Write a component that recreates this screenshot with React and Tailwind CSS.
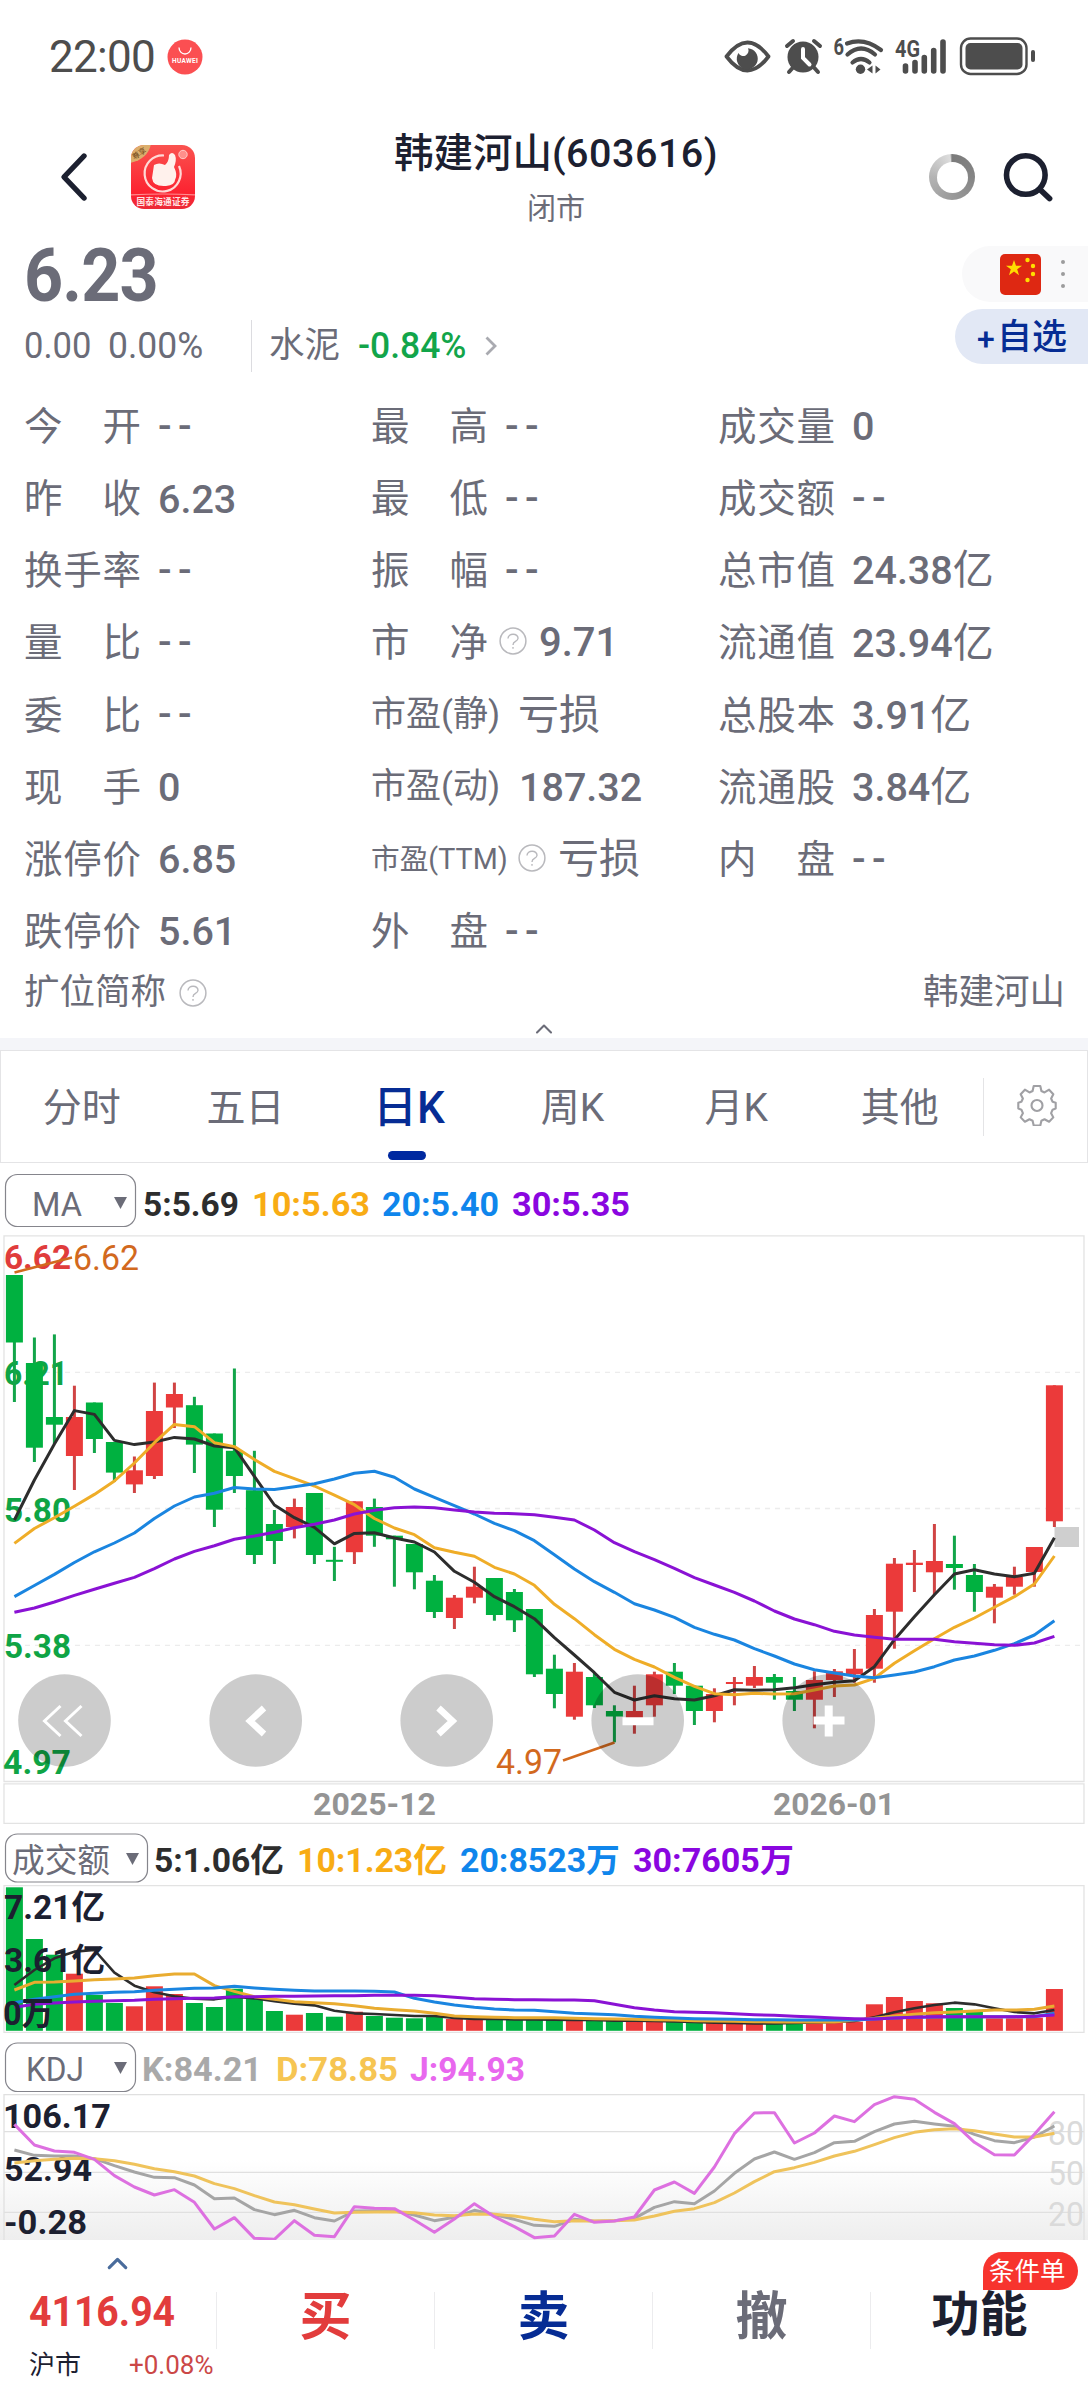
import { ChevronUp } from 'lucide-react';

const GREEN = '#00b140';
const RED = '#eb3a3a';
const STEP = 20;
const FIRST_X = 14.4;

// [high, bodyTop, bodyBottom, low, up]
const candles = [
  [1275, 1275, 1342.5, 1402, 0], [1337.5, 1363, 1447.7, 1462, 0], [1334.4, 1417, 1424.7, 1444, 0],
  [1385.7, 1417, 1456, 1490, 1], [1402.5, 1402.5, 1439, 1453, 0], [1442, 1442, 1472.6, 1481.8, 0],
  [1456.5, 1470.3, 1484.4, 1493, 1], [1382.6, 1411, 1476, 1479, 1], [1382.6, 1394, 1407.5, 1428, 1],
  [1396.8, 1405.2, 1444.6, 1473, 0], [1433.5, 1433.5, 1509.7, 1527, 0], [1368.5, 1450.8, 1476, 1493, 0],
  [1450.8, 1490.2, 1555, 1564, 0], [1510, 1524, 1541, 1564, 0], [1498.6, 1507, 1527, 1538.4, 1],
  [1493, 1493, 1555, 1564, 0], [1546.8, 1559.8, 1561.8, 1581, 0], [1501.3, 1501.3, 1552.2, 1564, 1],
  [1498.6, 1507, 1535.7, 1546.8, 0], [1535.7, 1535.7, 1539.3, 1586.7, 0], [1544, 1544, 1572.3, 1589.3, 0],
  [1575, 1580.7, 1612, 1618, 0], [1595, 1597.7, 1618, 1629, 1], [1566.7, 1586.7, 1597.7, 1603.3, 1],
  [1578, 1578, 1615, 1620.7, 0], [1589, 1592, 1620.3, 1632, 0], [1609, 1609, 1674.3, 1677, 0],
  [1654.7, 1668.7, 1694, 1708.3, 0], [1663, 1671.7, 1716.7, 1719.7, 1], [1673, 1677, 1705.3, 1708, 0],
  [1705.3, 1711, 1716.5, 1742.3, 0], [1685.7, 1711, 1725, 1733.7, 1], [1671.7, 1674.3, 1705.3, 1716.7, 1],
  [1663, 1671.7, 1685.7, 1694, 0], [1685.7, 1685.7, 1711, 1725, 0], [1688.3, 1694, 1711, 1722.3, 1],
  [1677, 1682, 1684, 1705.3, 1], [1666, 1677, 1685.7, 1688, 1], [1674, 1677, 1682.7, 1699.7, 0],
  [1677, 1691, 1699.7, 1711, 0], [1671.3, 1680, 1699.7, 1728.3, 1], [1669, 1671.3, 1680, 1697, 1],
  [1649, 1668.7, 1674.3, 1682.7, 1], [1609, 1615, 1668.7, 1682.7, 1], [1558, 1563.7, 1611.7, 1648.7, 1],
  [1550, 1562.7, 1565, 1592, 1], [1524, 1561, 1572.3, 1595, 1], [1535.7, 1564, 1568, 1589.7, 0],
  [1564, 1575, 1592, 1611.7, 0], [1584, 1586.7, 1597.7, 1623.3, 1], [1566.7, 1577, 1586.7, 1594.7, 1],
  [1547, 1547, 1572, 1586.7, 1], [1385.3, 1385.3, 1521.3, 1527, 1],
];

const ma5 = [1520, 1480, 1444, 1410.6, 1414.4, 1440.4, 1444.6, 1442, 1437.4, 1439, 1446, 1447.7, 1476.4, 1505, 1517.7, 1527.3, 1543.8, 1533.4, 1532.7, 1538, 1542, 1552, 1571.3, 1582.3, 1596.7, 1606.7, 1618.7, 1637.7, 1655, 1672.7, 1692.3, 1700, 1695.7, 1698.7, 1700, 1695.7, 1689.7, 1690.3, 1689.7, 1687.7, 1684.7, 1682.3, 1680.7, 1666.7, 1639.7, 1616.7, 1594.7, 1574, 1569.7, 1574, 1576.7, 1573.3, 1537.7];
const ma10 = [1543.4, 1528.5, 1517.7, 1506.3, 1494.4, 1481, 1463, 1442.7, 1424.4, 1426.7, 1442.7, 1446.6, 1459.6, 1471.4, 1478.7, 1486, 1495.2, 1504.7, 1518.5, 1528, 1534.7, 1547.7, 1552.3, 1556.3, 1567.3, 1574, 1585.3, 1604.3, 1618.7, 1634.7, 1649.3, 1659.3, 1667, 1677.3, 1686.3, 1693.7, 1694.7, 1693.3, 1694, 1693.7, 1690, 1686, 1685, 1678.3, 1663.3, 1650.7, 1638.7, 1627.3, 1618, 1607.3, 1596.7, 1584, 1556];
const ma20 = [1596.6, 1585.5, 1574.4, 1562.5, 1551.8, 1543, 1533, 1518.5, 1506, 1497, 1493.2, 1487.5, 1489, 1489.4, 1486.7, 1483.7, 1479, 1473.3, 1471.3, 1477.3, 1489, 1497.3, 1505.7, 1514, 1523.3, 1530.7, 1540.7, 1554.7, 1569, 1581.7, 1592.3, 1603.7, 1610, 1617.3, 1627.3, 1634.3, 1640, 1648.7, 1656, 1664, 1669.7, 1673, 1676, 1677.7, 1675, 1672, 1666.7, 1660, 1656, 1650.3, 1643.7, 1635, 1620.7];
const ma30 = [1612.3, 1608, 1602, 1595.4, 1589.3, 1583.2, 1577.4, 1568.6, 1559, 1551.4, 1545.7, 1539.2, 1536, 1532.3, 1527.7, 1524.2, 1520, 1514, 1510.3, 1507.7, 1507, 1507.7, 1510, 1512, 1513.3, 1513.7, 1514.7, 1517.3, 1520, 1530, 1542.7, 1551.7, 1559.7, 1568.3, 1577.7, 1585, 1592.3, 1601, 1611, 1619, 1624.7, 1631.3, 1635, 1637.3, 1639.3, 1639.3, 1639.3, 1641.7, 1643.3, 1644.7, 1645.3, 1643, 1636.3];

const volumes = [1887.3, 1939, 1954.7, 1973.7, 1995, 2003, 2006.3, 1986.3, 1994, 2003, 2007, 1988.7, 1996.7, 2011, 2014.7, 2013, 2016.7, 2011.7, 2016, 2017.7, 2018.3, 2017, 2019, 2019.7, 2020, 2020, 2020, 2020, 2020, 2021, 2020.3, 2020.7, 2020.7, 2021.3, 2021.3, 2022.3, 2024, 2023.3, 2022.7, 2022.7, 2022.7, 2022.3, 2021.7, 2004.3, 1997, 2001, 2003.3, 2008, 2011.7, 2018.3, 2018.3, 2017.7, 1989];
const volUp = [3, 6, 7, 8, 14, 17, 22, 23, 28, 31, 32, 35, 36, 37, 40, 41, 42, 43, 44, 45, 46, 49, 50, 51, 52];

// thirds of a pixel below 1820
const vol5 = [495, 450, 415, 395, 390, 458, 497, 517, 529, 536, 538, 530, 535, 544, 551, 556, 572, 580, 582, 585, 588, 588, 594, 597, 597, 598, 598, 599, 600, 600, 602, 602, 603, 604, 606, 608, 609, 610, 610, 609, 607, 606, 603, 592, 577, 565, 555, 548, 553, 565, 576, 580, 570];
const vol10 = [510, 487, 486, 483, 479, 477, 474, 467, 462, 462, 497, 514, 530, 538, 545, 548, 551, 557, 565, 569, 573, 580, 588, 590, 592, 593, 593, 593, 595, 596, 597, 598, 599, 600, 602, 603, 604, 605, 606, 606, 606, 606, 600, 595, 588, 583, 578, 576, 573, 570, 570, 568, 558];
const vol20 = [548, 538, 530, 523, 520, 517, 515, 511, 508, 505, 504, 499, 504, 508, 511, 513, 513, 513, 514, 516, 535, 546, 555, 562, 567, 570, 571, 575, 580, 582, 584, 589, 592, 594, 596, 597, 598, 599, 599, 600, 600, 600, 600, 597, 594, 592, 591, 590, 590, 590, 590, 590, 580];
const vol30 = [562, 553, 549, 546, 544, 542, 541, 538, 536, 535, 534, 530, 530, 529, 529, 528, 527, 527, 526, 526, 526, 527, 532, 536, 538, 539, 539, 540, 540, 542, 553, 563, 570, 575, 577, 578, 581, 584, 586, 589, 591, 594, 596, 597, 594, 592, 590, 590, 590, 590, 590, 589, 585];

// thirds of a pixel below 2090
const kLine = [180, 196, 198, 198, 206, 227, 246, 262, 263, 285, 326, 324, 359, 374, 361, 383, 393, 363, 362, 363, 375, 392, 382, 361, 374, 388, 406, 409, 388, 394, 392, 385, 352, 335, 341, 303, 250, 207, 186, 208, 188, 158, 154, 125, 102, 94, 102, 109, 133, 152, 158, 141, 108];
const dLine = [219, 212, 208, 205, 206, 212, 223, 236, 245, 258, 281, 296, 317, 336, 344, 357, 369, 367, 366, 365, 368, 375, 377, 372, 373, 378, 388, 395, 392, 393, 392, 390, 378, 364, 356, 338, 309, 275, 245, 233, 217, 198, 184, 164, 143, 127, 119, 116, 122, 132, 141, 141, 130];
const jLine = [103, 165, 183, 187, 208, 257, 291, 315, 299, 337, 417, 383, 445, 448, 392, 436, 440, 350, 355, 356, 390, 427, 387, 341, 380, 410, 443, 438, 373, 397, 393, 381, 300, 276, 310, 231, 131, 69, 68, 159, 129, 78, 95, 44, 20, 28, 67, 101, 157, 194, 195, 133, 65];

const xAt = (i) => FIRST_X + i * STEP;
const toPoints = (ys) => ys.map((y, i) => `${xAt(i)},${y}`).join(' ');
const thirds = (base, values) => values.map((v) => base + v / 3);

const Line = ({ ys, color, width = 3 }) => (
  <polyline points={toPoints(ys)} fill="none" stroke={color} strokeWidth={width} strokeLinejoin="round" />
);

const Label = ({ x, y, w, color, bold = true, size = 33, children }) => (
  <text
    x={x}
    y={y}
    fill={color}
    fontSize={size}
    fontWeight={bold ? 700 : 400}
    textLength={w}
    lengthAdjust="spacingAndGlyphs"
  >
    {children}
  </text>
);

const StatusBar = () => (
  <div className="flex h-[113px] items-center pl-[49px] pr-[49px] text-[#4d4d4d]">
    <span className="text-[44px] leading-none tracking-[-0.7px]">22:00</span>
    <svg className="ml-[12px] h-[36px] w-[36px]" viewBox="0 0 36 36">
      <circle cx="18" cy="18" r="17.5" fill="#fb4f52" />
      <path d="M12 8.500a6 6.500 0 0 0 12 0" fill="none" stroke="#fff" strokeWidth="1.300" />
      <text x="5" y="24" fontSize="6.500" fontWeight="700" fill="#fff" textLength="26">HUAWEI</text>
    </svg>
    <svg className="ml-auto h-[46px] w-[318px]" viewBox="720 33.500 318 46" fill="none" stroke="#4d4d4d">
      <path d="M725.500 56Q746.500 28 767.500 56Q746.500 84 725.500 56Z" strokeWidth="3.800" strokeLinejoin="round" />
      <path d="M737.500 52.500a4.500 4.500 0 0 0 9.500-4.700a10.500 10.500 0 1 1-9.500 4.700Z" fill="#4d4d4d" stroke="none" />
      <circle cx="802" cy="56.500" r="15.500" fill="#4d4d4d" stroke="none" />
      <path d="M786 45.500l6-5M819 45.500l-6-5M792 67l-4 4.500M813 67l4 4.500" strokeWidth="4" strokeLinecap="round" />
      <path d="M802 48.500v9l6.500 6.500" stroke="#fff" strokeWidth="4" strokeLinecap="round" />
      <text x="832.500" y="54" fontSize="23" fontWeight="700" fill="#4d4d4d" stroke="none" textLength="10.500" lengthAdjust="spacingAndGlyphs">6</text>
      <path d="M846 43Q863 36.500 880 49.500M846.500 54Q860 42 874 54M851.500 62Q860 55 868.500 62" strokeWidth="4.200" strokeLinecap="round" />
      <circle cx="859.500" cy="68.700" r="4.700" fill="#4d4d4d" stroke="none" />
      <path d="M871.500 65v8l-5.500-4ZM874.500 65v8l5-4Z" fill="#4d4d4d" stroke="none" />
      <text x="894" y="56" fontSize="24" fontWeight="700" fill="#4d4d4d" stroke="none" textLength="25" lengthAdjust="spacingAndGlyphs">4G</text>
      <path d="M904.500 65.500v5M914 62v8.500M923.300 57v13.500M932.700 50v20.500M942 41.500v29" strokeWidth="5.600" strokeLinecap="round" />
      <rect x="960" y="38" width="65.500" height="35.500" rx="9.500" strokeWidth="2.400" />
      <rect x="964.500" y="42.500" width="57" height="26.500" rx="5" fill="#4d4d4d" stroke="none" />
      <rect x="1030" y="49.500" width="4" height="12" rx="2" fill="#4d4d4d" stroke="none" />
    </svg>
  </div>
);

const BrokerLogo = () => (
  <svg className="h-[66px] w-[66px]" viewBox="0 0 66 66">
    <defs>
      <linearGradient id="logoRed" x1="0" y1="0" x2="0" y2="1">
        <stop offset="0" stopColor="#fa5450" />
        <stop offset="0.750" stopColor="#fc2230" />
        <stop offset="1" stopColor="#ea2b38" />
      </linearGradient>
      <clipPath id="logoClip"><rect x="1" y="1" width="64" height="64" rx="13" /></clipPath>
    </defs>
    <g clipPath="url(#logoClip)">
      <rect width="66" height="66" fill="url(#logoRed)" />
      <path d="M0 0H21Q18 15 0 19Z" fill="#dcae6c" />
      <text x="2" y="14" fontSize="7.500" fill="#6b4417" transform="rotate(-32 6 11)">尊享</text>
      <path d="M34 11.500A18 18 0 1 0 49 22" fill="none" stroke="#ffd9d6" strokeWidth="2.200" />
      <path d="M24 21q5-3 11 0q4-3 4-10q3-4 6 0q2 5-1 12q4 8 1 13q0 5-9 6q-13 1-14-8Z" fill="#fff1ec" />
      <circle cx="53" cy="10.500" r="4.200" fill="#ff8f8b" stroke="#ffc9c5" strokeWidth="1" />
      <path d="M0 51Q33 49 66 51" fill="none" stroke="#ff8d90" strokeWidth="1.200" />
      <text x="6.500" y="61" fontSize="8.700" fontWeight="700" fill="#ffe6e6" textLength="53">国泰海通证券</text>
    </g>
  </svg>
);

const Header = () => (
  <div className="flex h-[132px] items-start pl-[60px] pr-[35px]">
    <svg className="mt-[39px] h-[50px] w-[28px]" viewBox="0 0 28 50">
      <path d="M24 4L4 25L24 46" fill="none" stroke="#1c2030" strokeWidth="5.400" strokeLinecap="round" strokeLinejoin="round" />
    </svg>
    <div className="ml-[42px] mt-[31px]"><BrokerLogo /></div>
    <div className="flex flex-1 flex-col items-center pr-[13px] pt-[17px]">
      <h1 className="whitespace-nowrap text-[39.5px] font-medium leading-[48px] text-[#1c2030]">
        韩建河山<span className="tracking-[0.5px]">(603616)</span>
      </h1>
      <span className="mt-[14px] text-[29px] leading-[34px] text-[#6b6c78]">闭市</span>
    </div>
    <div className="mt-[41px] flex h-[46px] w-[46px] items-center justify-center rounded-full bg-[conic-gradient(#7b7b7b_0deg,#858585_90deg,#9a9a9a_180deg,#b4b4b4_270deg,#dddddd_355deg,#7b7b7b_360deg)]">
      <div className="h-[31px] w-[31px] rounded-full bg-white" />
    </div>
    <svg className="ml-[28px] mt-[39px] h-[50px] w-[50px]" viewBox="1002 152 50 50">
      <circle cx="1024.800" cy="175" r="19.300" fill="none" stroke="#1c2030" strokeWidth="5.600" />
      <path d="M1039 189.500l9.500 9" stroke="#1c2030" strokeWidth="5.800" strokeLinecap="round" />
    </svg>
  </div>
);

const ChinaFlag = () => (
  <svg className="h-[41px] w-[41px]" viewBox="0 0 41 41">
    <rect width="41" height="41" rx="5" fill="#de2812" />
    <g fill="#ffde00">
      <path d="M14 6l2 5.700h6l-4.800 3.600 1.800 5.900-5-3.600-5 3.600 1.800-5.900L6 11.700h6Z" />
      <circle cx="27.500" cy="6" r="2.200" />
      <circle cx="33" cy="12" r="2.200" />
      <circle cx="33" cy="20" r="2.200" />
      <circle cx="27.500" cy="26" r="2.200" />
    </g>
  </svg>
);

const PriceSummary = () => (
  <div className="flex h-[145px] justify-between text-[#6b6c78]">
    <div className="pl-[24px]">
      <div className="h-[68px] origin-left scale-x-[0.91] text-[75px] font-bold leading-[60px] tracking-[-1px]">6.23</div>
      <div className="flex h-[66px] items-center text-[36px]">
        <span className="w-[84px] origin-left scale-x-[0.96]">0.00</span>
        <span className="w-[143px] origin-left scale-x-[0.985]">0.00%</span>
        <span className="h-[52px] w-px bg-[#dcdce0]" />
        <span className="ml-[17px] text-[35.5px]">水泥</span>
        <span className="ml-[18px] w-[122px] origin-left scale-x-[0.985] font-medium text-[#12a54a]">-0.84%</span>
        <svg className="ml-[5px] h-[20px] w-[12px]" viewBox="0 0 12 20">
          <path d="M1.500 1.500L10 10L1.500 18.500" fill="none" stroke="#a9aab0" strokeWidth="2.800" />
        </svg>
      </div>
    </div>
    <div className="flex flex-col items-end pt-[1px]">
      <div className="flex h-[56px] w-[126px] items-center rounded-l-full bg-[#f9f9fa] pl-[38px]">
        <ChinaFlag />
        <div className="ml-[20px] flex flex-col gap-[8px]">
          <i className="h-[4px] w-[4px] rounded-full bg-[#9c9c9c]" />
          <i className="h-[4px] w-[4px] rounded-full bg-[#9c9c9c]" />
          <i className="h-[4px] w-[4px] rounded-full bg-[#9c9c9c]" />
        </div>
      </div>
      <div className="mt-[7px] flex h-[55px] w-[133px] items-center rounded-l-full bg-[#e2e8f5] pl-[22px] pt-[4px] text-[35px] font-medium text-[#062c94]">
        <span className="w-[20px] text-[32px]">+</span>自选
      </div>
    </div>
  </div>
);

const Help = () => (
  <svg className="h-[28px] w-[28px] flex-none" viewBox="0 0 28 28" fill="none" stroke="#b9b9bd">
    <circle cx="14" cy="14" r="12.900" strokeWidth="1.500" />
    <path d="M9 11.500c0-6 10.500-5.500 10 0c-.5 3.500-5 2.500-5 6.500M14 20v1.800" strokeWidth="1.400" />
  </svg>
);

const columns = [
  [
    { label: '今开', value: '--' },
    { label: '昨收', value: '6.23' },
    { label: '换手率', value: '--' },
    { label: '量比', value: '--' },
    { label: '委比', value: '--' },
    { label: '现手', value: '0' },
    { label: '涨停价', value: '6.85' },
    { label: '跌停价', value: '5.61' },
  ],
  [
    { label: '最高', value: '--' },
    { label: '最低', value: '--' },
    { label: '振幅', value: '--' },
    { label: '市净', value: '9.71', help: true },
    { label: '市盈(静)', value: '亏损', kind: 'pe' },
    { label: '市盈(动)', value: '187.32', kind: 'pe' },
    { label: '市盈(TTM)', value: '亏损', kind: 'ttm', help: true },
    { label: '外盘', value: '--' },
  ],
  [
    { label: '成交量', value: '0' },
    { label: '成交额', value: '--' },
    { label: '总市值', value: '24.38', unit: '亿' },
    { label: '流通值', value: '23.94', unit: '亿' },
    { label: '总股本', value: '3.91', unit: '亿' },
    { label: '流通股', value: '3.84', unit: '亿' },
    { label: '内盘', value: '--' },
  ],
];

const QuoteLabel = ({ label, kind }) => {
  if (kind === 'pe') return <span className="w-[131px] whitespace-nowrap text-[35px]">{label}</span>;
  if (kind === 'ttm') return <span className="w-[136px] whitespace-nowrap text-[28.7px]">{label}</span>;
  return (
    <span className="flex w-[117px] justify-between text-[38.5px]">
      {label.split('').map((char) => <span key={char}>{char}</span>)}
    </span>
  );
};

const QuoteRow = ({ label, value, unit, kind, help }) => (
  <div className="flex h-[72.1px] items-center">
    <QuoteLabel label={label} kind={kind} />
    {help && <span className="ml-[11px] -translate-y-[2px]"><Help /></span>}
    <span
      className={
        value === '--'
          ? 'ml-[17px] text-[40px] font-medium tracking-[6.5px]'
          : value === '亏损'
            ? (help ? 'ml-[12px] text-[41px]' : 'ml-[16px] text-[41px]')
            : help
              ? 'ml-[12px] text-[40px] font-medium'
              : 'ml-[17px] text-[39.5px] font-medium'
      }
    >
      {value}
      {unit && <span className="text-[41px] font-normal">{unit}</span>}
    </span>
  </div>
);

const QuoteDetails = () => (
  <section className="h-[648px] pt-[1px] text-[#6b6c78]">
    <div className="grid h-[577px] grid-cols-[347px_347px_1fr] pl-[24px]">
      {columns.map((rows, i) => (
        <div key={i}>
          {rows.map((row) => <QuoteRow key={row.label} {...row} />)}
        </div>
      ))}
    </div>
    <div className="flex h-[50px] items-center justify-between pl-[24px] pr-[23px] text-[35.5px]">
      <span className="flex items-center gap-[13px]">扩位简称<Help /></span>
      <span>韩建河山</span>
    </div>
    <ChevronUp className="mx-auto h-[28px] w-[32px] -translate-y-[3px] text-[#6b6c78]" strokeWidth={1.800} />
  </section>
);

const tabs = ['分时', '五日', '日K', '周K', '月K', '其他'];

const Gear = () => (
  <svg className="h-[44px] w-[44px] -translate-y-[3px] translate-x-[2px]" viewBox="0 0 24 24" fill="none" stroke="#a0a0a4" strokeWidth="1.150">
    <path d="M10.200 2.200h3.600l.6 2.700 1.700.8 2.500-1.500 2.300 2.500-1.200 2.300.8 1.800 1.700.5v3.200l-1.700.6-.8 1.900 1.200 2.300-2.300 2.400-2.500-1.400-1.700.8-.6 2.600h-3.600l-.6-2.600-1.700-.8-2.500 1.400-2.300-2.400 1.200-2.300-.8-1.900-1.700-.6v-3.200l1.700-.5.8-1.800-1.200-2.300 2.300-2.500 2.500 1.500 1.700-.8Z" strokeLinejoin="round" />
    <circle cx="12" cy="12.800" r="3" />
  </svg>
);

const PeriodTabs = () => (
  <div className="flex h-[113px] items-center border border-[#e4e4e6] text-[#6b6c78]">
    {tabs.map((tab) => (
      <div key={tab} className="relative flex h-full w-[163.600px] items-center justify-center pr-[2px] pt-[3px] text-[39px]">
        {tab === '日K' ? (
          <>
            <span className="text-[44px] font-medium text-[#062c94]">{tab}</span>
            <span className="absolute bottom-[2px] left-[60px] h-[9px] w-[38px] rounded-full bg-[#0029a0]" />
          </>
        ) : (
          <span>{tab}</span>
        )}
      </div>
    ))}
    <span className="h-[58px] w-px bg-[#e4e4e6]" />
    <div className="flex flex-1 justify-center"><Gear /></div>
  </div>
);

const IndicatorBar = ({ name, top, height, boxY, boxWidth, boxHeight, nameX, nameW, items }) => (
  <svg className="block w-[1088px]" style={{ height }} viewBox={`0 ${top} 1088 ${height}`}>
    {/* selector */}
    <rect x="5.500" y={boxY} width={boxWidth} height={boxHeight} rx="12" fill="#fff" stroke="#85858c" strokeWidth="1.200" />
    <Label x={nameX} y={items[0].y} w={nameW} color="#6b6c78" bold={false}>{name}</Label>
    <path d={`M${boxWidth - 16} ${items[0].y - 19}h13l-6.500 12Z`} fill="#6b6c78" />
    {items.map((item) => (
      <Label key={item.text} x={item.x} y={item.y} w={item.w} color={item.color}>{item.text}</Label>
    ))}
  </svg>
);

const KLineChart = () => (
  <svg className="block h-[590px] w-[1088px]" viewBox="0 1235 1088 590">
    <g fill="none" stroke="#e3e3e3" strokeWidth="1.300">
      <path d="M4 1235.800H1084V1781.500H4ZM4 1783.800H1084V1823.300H4Z" />
      <path d="M5 1372.300H1084M5 1508.500H1084M5 1645.300H1084" stroke="#ececec" strokeDasharray="5 5" />
    </g>

    <Label x="4" y="1269" w="67" color="#e03c3c">6.62</Label>
    <Label x="4" y="1385" w="64" color="#0fa445">6.21</Label>
    <Label x="4" y="1522" w="67" color="#0fa445">5.80</Label>
    <Label x="4" y="1657.500" w="67" color="#0fa445">5.38</Label>
    <Label x="3" y="1773.500" w="68" color="#0fa445">4.97</Label>

    {candles.map(([high, top, bottom, low, up], i) => (
      <g key={i} fill={up ? RED : GREEN}>
        <rect x={xAt(i) - 1.500} y={high} width="3" height={low - high} fill={up ? '#d04444' : '#12a54a'} />
        <rect x={xAt(i) - 8.500} y={top} width="17" height={bottom - top} />
      </g>
    ))}

    <rect x="1054.500" y="1527" width="24.500" height="20" fill="#cfcfcf" />
    <Line ys={ma5} color="#2d2d2d" />
    <Line ys={ma10} color="#efad28" />
    <Line ys={ma20} color="#1a85e0" />
    <Line ys={ma30} color="#8a12d4" />

    <path d="M14.500 1267.500L72 1252.500" transform="translate(0 5)" stroke="#d2691e" strokeWidth="2.600" />
    <path d="M563 1760.500L614.500 1742.500" stroke="#d2691e" strokeWidth="2.600" />
    <Label x="73" y="1270" w="66" size={35} color="#d2691e" bold={false}>6.62</Label>
    <Label x="496" y="1773.500" w="66" size={35} color="#d2691e" bold={false}>4.97</Label>

    {/* pan and zoom controls */}
    {[64.500, 255.700, 446.700, 637.700, 828.700].map((cx) => (
      <circle key={cx} cx={cx} cy="1720.500" r="46.300" fill="#000" fillOpacity="0.200" />
    ))}
    <g fill="none" stroke="#fff" strokeWidth="3">
      <path d="M60.500 1706L44.500 1721L60.500 1736M81.500 1706L65.500 1721L81.500 1736" />
      <path d="M264 1708L250 1721L264 1734M438.500 1708L452.500 1721L438.500 1734" strokeWidth="6.500" />
      <path d="M622.500 1721.300h31M813.500 1720.500h31M828.700 1705.500v31" strokeWidth="8" />
    </g>

    <Label x="313" y="1815" w="123" size={31} color="#949494">2025-12</Label>
    <Label x="773" y="1815" w="122" size={31} color="#949494">2026-01</Label>
  </svg>
);

const VolumeChart = () => (
  <svg className="block h-[148px] w-[1088px]" viewBox="0 1885 1088 148">
    <path d="M4 1885.700H1084V2032.300H4Z" fill="none" stroke="#e3e3e3" strokeWidth="1.300" />
    {volumes.map((top, i) => (
      <rect key={i} x={xAt(i) - 8.500} y={top} width="17" height={2030.800 - top} fill={volUp.includes(i) ? RED : GREEN} />
    ))}
    <Line ys={thirds(1820, vol5)} color="#2d2d2d" width={2.600} />
    <Line ys={thirds(1820, vol10)} color="#e9ac30" />
    <Line ys={thirds(1820, vol20)} color="#1a85e0" />
    <Line ys={thirds(1820, vol30)} color="#8a12d4" />
    <Label x="4" y="1919" w="101" color="#1c2030">7.21亿</Label>
    <Label x="4" y="1972" w="101" color="#1c2030">3.61亿</Label>
    <Label x="3" y="2025" w="51" color="#1c2030">0万</Label>
  </svg>
);

const KdjChart = () => (
  <svg className="block h-[146px] w-[1088px] overflow-visible" viewBox="0 2094 1088 146">
    <defs>
      <linearGradient id="kdjFade" x1="0" y1="0" x2="0" y2="1">
        <stop offset="0.450" stopColor="#fff" />
        <stop offset="1" stopColor="#eeeeee" />
      </linearGradient>
    </defs>
    <rect x="0" y="2094" width="1088" height="146" fill="url(#kdjFade)" />
    <path d="M4 2240V2094.700H1084V2240M4 2131.700H1084M4 2172.300H1084M4 2212.300H1084" fill="none" stroke="#e0e0e0" strokeWidth="1.300" />
    <Label x="1048" y="2145" w="36" color="#dadada" bold={false}>80</Label>
    <Label x="1048" y="2185" w="36" color="#dadada" bold={false}>50</Label>
    <Label x="1048" y="2226" w="36" color="#dadada" bold={false}>20</Label>
    <Label x="3" y="2128" w="108" color="#1c2030">106.17</Label>
    <Label x="4" y="2181" w="88" color="#1c2030">52.94</Label>
    <Label x="4" y="2234" w="83" color="#1c2030">-0.28</Label>
    <Line ys={thirds(2090, kLine)} color="#a5a5a5" />
    <Line ys={thirds(2090, dLine)} color="#efc35c" />
    <Line ys={thirds(2090, jLine)} color="#dd70e0" />
  </svg>
);

const TradeBar = () => (
  <footer className="relative flex h-[160px] bg-white">
    <div className="relative flex w-[217px] flex-col pl-[29px]">
      <ChevronUp className="ml-[72px] mt-[7px] h-[33px] w-[33px] text-[#4a6c9c]" strokeWidth={2.300} />
      <span className="mt-[8px] origin-left scale-x-[0.91] text-[43px] font-bold leading-[46px] text-[#e23c3c]">4116.94</span>
      <div className="mt-[14px] flex items-center leading-[34px]">
        <span className="w-[100px] text-[26px] text-[#1c2030]">沪市</span>
        <span className="text-[26px] text-[#cb4747]">+0.08%</span>
      </div>
    </div>
    <div className="mt-[52px] flex h-[57px] flex-1 items-center text-[52px] font-bold">
      <div className="flex h-full w-[218px] items-center justify-center border-l border-[#ececee] text-[#e23c3c]"><span className="-translate-y-[3px]">买</span></div>
      <div className="flex h-full w-[218px] items-center justify-center border-l border-[#ececee] text-[#062c94]"><span className="-translate-y-[3px]">卖</span></div>
      <div className="flex h-full w-[218px] items-center justify-center border-l border-[#ececee] text-[#6b6c78]"><span className="-translate-y-[3px]">撤</span></div>
      <div className="relative flex h-full w-[218px] items-center justify-center border-l border-[#ececee] text-[48px] text-[#1c2030]">
        <span className="-translate-y-[6px]">功能</span>
        <span className="absolute left-[112px] top-[-40px] flex h-[38px] w-[95px] items-center rounded-full rounded-bl-none bg-[#f7342e] pl-[6px] text-[25.500px] font-normal text-white">条件单</span>
      </div>
    </div>
  </footer>
);

export default function App() {
  return (
    <div className="h-[2400px] w-[1088px] overflow-hidden bg-white font-[Roboto,'Noto_Sans_CJK_SC',sans-serif]">
      <StatusBar />
      <Header />
      <PriceSummary />
      <QuoteDetails />
      <div className="h-[12px] bg-[#f4f5f9]" />
      <PeriodTabs />
      <IndicatorBar
        name="MA"
        top={1163}
        height={72}
        boxY={1174.500}
        boxWidth={130}
        boxHeight={52}
        nameX={32}
        nameW={50}
        items={[
          { text: '5:5.69', x: 143, y: 1216, w: 96, color: '#2d2d2d' },
          { text: '10:5.63', x: 252, y: 1216, w: 118, color: '#f8ac14' },
          { text: '20:5.40', x: 382, y: 1216, w: 117, color: '#0f86ec' },
          { text: '30:5.35', x: 512, y: 1216, w: 118, color: '#8a06e0' },
        ]}
      />
      <KLineChart />
      <IndicatorBar
        name="成交额"
        top={1825}
        height={60}
        boxY={1834}
        boxWidth={142}
        boxHeight={48}
        nameX={12}
        nameW={98}
        items={[
          { text: '5:1.06亿', x: 154, y: 1872, w: 130, color: '#2d2d2d' },
          { text: '10:1.23亿', x: 297, y: 1872, w: 150, color: '#f8ac14' },
          { text: '20:8523万', x: 460, y: 1872, w: 160, color: '#0f86ec' },
          { text: '30:7605万', x: 633, y: 1872, w: 161, color: '#8a06e0' },
        ]}
      />
      <VolumeChart />
      <IndicatorBar
        name="KDJ"
        top={2033}
        height={61}
        boxY={2043}
        boxWidth={130}
        boxHeight={48.500}
        nameX={26}
        nameW={58}
        items={[
          { text: 'K:84.21', x: 142, y: 2081, w: 120, color: '#a9a9a9' },
          { text: 'D:78.85', x: 276, y: 2081, w: 122, color: '#f6c552' },
          { text: 'J:94.93', x: 410, y: 2081, w: 115, color: '#e868ee' },
        ]}
      />
      <KdjChart />
      <TradeBar />
    </div>
  );
}
